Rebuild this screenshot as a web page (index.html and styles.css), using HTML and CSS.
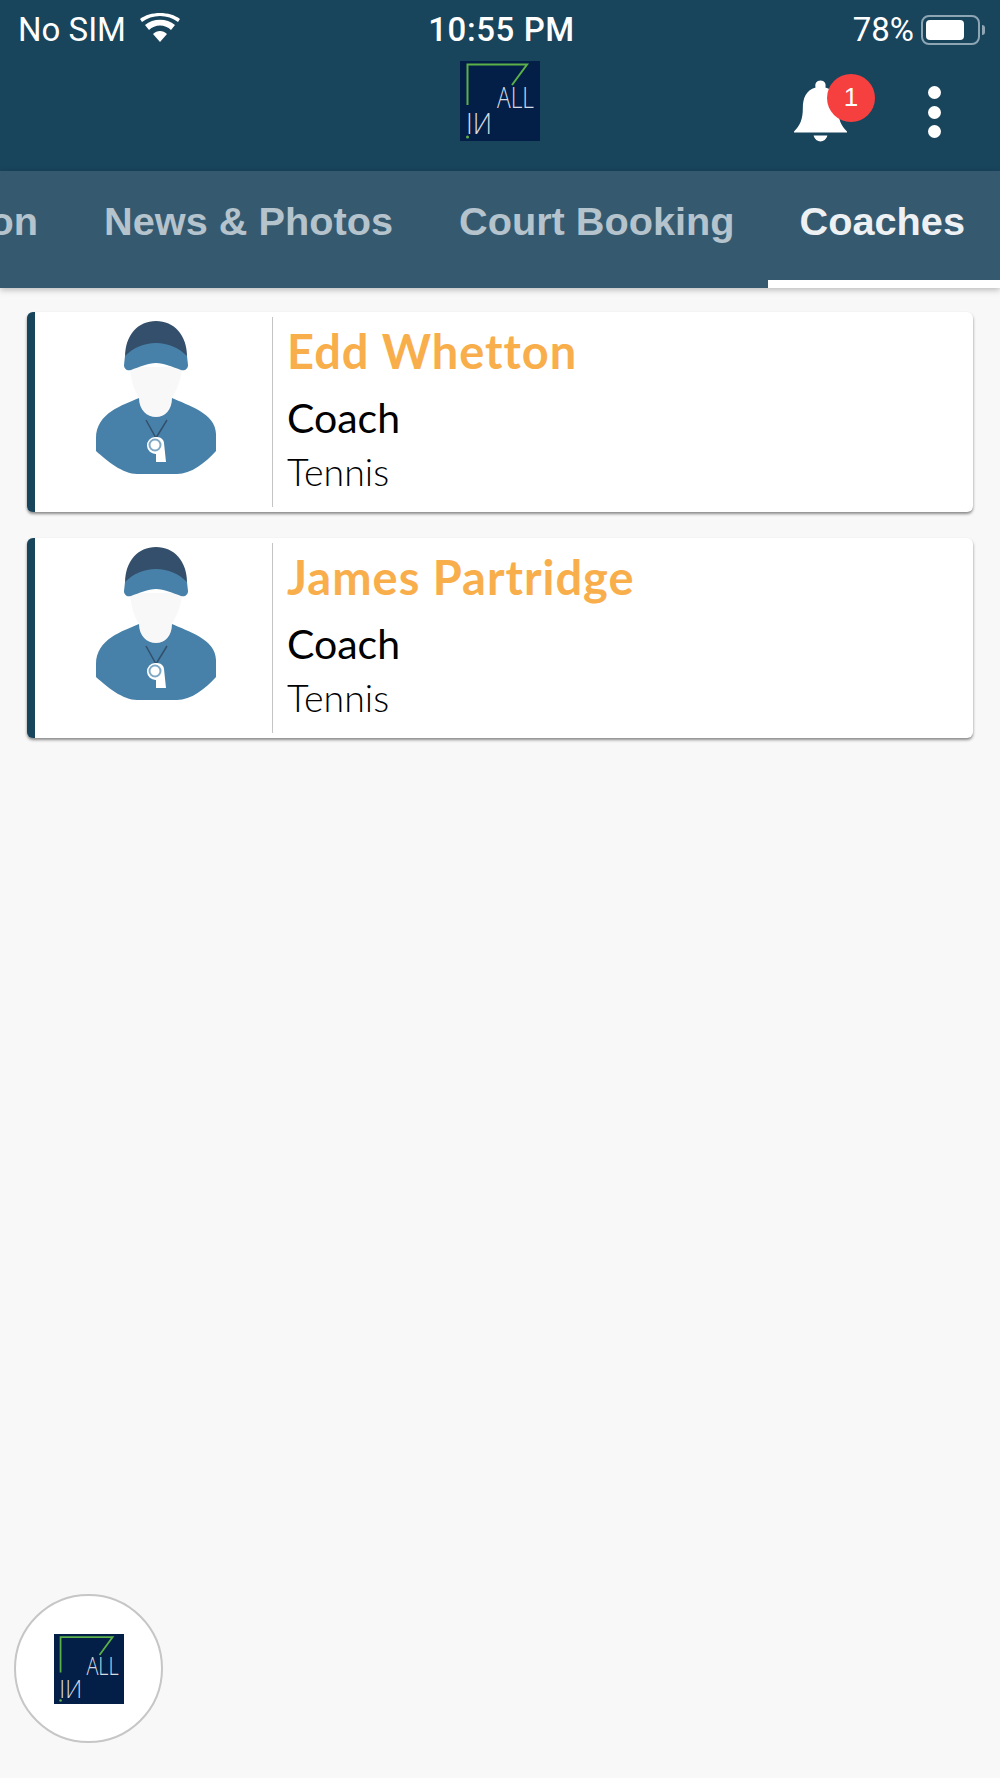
FILE: index.html
```html
<!DOCTYPE html>
<html lang="en">
<head>
    <meta charset="UTF-8">
    <meta name="viewport" content="width=device-width, initial-scale=1.0">
    <title>Coaches</title>
    <link rel="stylesheet" href="styles.css">
</head>
<body>
    <svg class="defs" width="0" height="0">
        <symbol id="coach" viewBox="0 0 237 200">
            <path d="M104 86C88 93 61 101 61 126V139C72 149 88 162 102 162H142C156 162 170 151 181 139V122C181 101 152 93 137 86Z" fill="#4781a9"/>
            <path d="M95 55C96 71 100 79 104 86C104 98 112 105 121 105C130 105 137 98 137 86C142 77 146 69 147 55Z" fill="#f8f8f8"/>
            <path d="M90 45C90 23 103 9 121 9C139 9 152 23 152 45Z" fill="#344f6b"/>
            <path d="M90 44C98 36 109 31 121 31C133 31 144 36 152 44L153 53C153 57 150 59 146 58C138 55 129 51 121 51C113 51 104 55 96 58C92 59 89 57 89 53Z" fill="#4781a9"/>
            <path d="M111 108L121 126L132 108" fill="none" stroke="#344f6b" stroke-width="1.5"/>
            <path d="M120 125H122C126 125 129 128 129 131L131 150H121V142A8.5 8.5 0 0 1 120 125Z" fill="#fff"/>
            <circle cx="120" cy="133" r="5.5" fill="none" stroke="#7fa8c4" stroke-width="2"/>
        </symbol>
    </svg>

    <header class="topbar">
        <div class="status">
            <div class="status-left">
                <span>No SIM</span>
                <svg class="wifi" viewBox="0 0 40 30">
                    <path d="M20 29L13 21C17 17 23 17 27 21ZM9 17L5 12C13 5 27 5 35 12L31 17C25 11 15 11 9 17ZM2 9L0 6C10 -2 30 -2 40 6L38 9C28 1 12 1 2 9Z" fill="#fff"/>
                </svg>
            </div>
            <div class="status-time">10:55 PM</div>
            <div class="status-right">
                <span>78%</span>
                <div class="battery"><div class="battery-fill"></div></div>
                <div class="battery-nub"></div>
            </div>
        </div>
        <div class="actions">
            <svg class="logo-top" viewBox="0 0 80 80">
                <rect width="80" height="80" fill="#041f47"/>
                <path d="M7.5 44V3.5H67L52 24" fill="none" stroke="#5cb048" stroke-width="2"/>
                <circle cx="7.5" cy="76" r="1.5" fill="#5cb048"/>
                <text class="logo-text" x="37" y="47" textLength="37" lengthAdjust="spacingAndGlyphs">ALL</text>
                <text class="logo-text" x="6" y="73" textLength="26" lengthAdjust="spacingAndGlyphs">IИ</text>
            </svg>
            <div class="bell-wrap">
                <svg class="bell" viewBox="0 0 54 62">
                    <path d="M27 0C31 0 33 3 32 7C42 10 45 18 45 28C45 40 48 46 54 52V53H0V52C6 46 9 40 9 28C9 18 12 10 22 7C21 3 23 0 27 0ZM20 56H34C33 60 30 62 27 62C24 62 21 60 20 56Z" fill="#fff"/>
                </svg>
                <span class="badge">1</span>
            </div>
            <div class="more"><i></i><i></i><i></i></div>
        </div>
    </header>

    <nav class="tabs">
        <a class="tab">Information</a>
        <a class="tab">News &amp; Photos</a>
        <a class="tab">Court Booking</a>
        <a class="tab active">Coaches</a>
    </nav>

    <main class="list">
        <div class="card">
            <svg class="avatar"><use href="#coach"/></svg>
            <div class="info">
                <div class="name">Edd Whetton</div>
                <div class="role">Coach</div>
                <div class="sport">Tennis</div>
            </div>
        </div>
        <div class="card">
            <svg class="avatar"><use href="#coach"/></svg>
            <div class="info">
                <div class="name">James Partridge</div>
                <div class="role">Coach</div>
                <div class="sport">Tennis</div>
            </div>
        </div>
    </main>

    <div class="fab">
        <svg class="logo-fab" viewBox="0 0 80 80">
            <rect width="80" height="80" fill="#041f47"/>
            <path d="M7.5 44V3.5H67L52 24" fill="none" stroke="#5cb048" stroke-width="2"/>
            <circle cx="7.5" cy="76" r="1.5" fill="#5cb048"/>
            <text class="logo-text" x="37" y="47" textLength="37" lengthAdjust="spacingAndGlyphs">ALL</text>
            <text class="logo-text" x="6" y="73" textLength="26" lengthAdjust="spacingAndGlyphs">IИ</text>
        </svg>
    </div>
</body>
</html>
```

FILE: styles.css
```css
* {box-sizing: border-box}
html, body {margin: 0; height: 100%}
body {font-family: "Liberation Sans", sans-serif; background: #f8f8f8; color: #000; height: 1778px; overflow: hidden; position: relative}
.defs {position: absolute}

.topbar {background: #18445c; height: 171px; color: #fff; position: relative}
.status {display: flex; justify-content: space-between; align-items: center; height: 54px; padding: 5px 15px 0 18px; font-family: Roboto, sans-serif; font-size: 33px; position: relative}
.status-left {display: flex; align-items: center; gap: 14px; width: 300px}
.wifi {width: 40px; height: 30px; margin-top: -3px}
.status-time {font-weight: 500; letter-spacing: 0.6px}
.status-right {display: flex; align-items: center; justify-content: flex-end; width: 300px}
.battery {width: 59px; height: 30px; border: 2px solid #8ea6b4; border-radius: 8px; padding: 3px; margin-left: 7px}
.battery-fill {width: 38px; height: 20px; background: #fff; border-radius: 4px}
.battery-nub {width: 3px; height: 10px; background: #8ea6b4; border-radius: 0 3px 3px 0; margin-left: 2px}

.actions {position: relative; height: 117px}
.logo-top {position: absolute; left: 460px; top: 7px; width: 80px; height: 80px; overflow: visible}
.logo-text {font-family: "Open Sans", sans-serif; font-size: 29px; font-weight: 300; fill: #d5dbe3}
.bell-wrap {position: absolute; left: 794px; top: 26px; width: 53px; height: 62px}
.bell {width: 53px; height: 62px; display: block}
.badge {position: absolute; left: 33px; top: -6px; width: 48px; height: 48px; border-radius: 50%; background: #f64040; font-size: 26px; line-height: 46px; text-align: center; color: #fff}
.more {position: absolute; left: 928px; top: 32px; display: flex; flex-direction: column; gap: 6.5px}
.more i {display: block; width: 13px; height: 13px; background: #fff; border-radius: 50%}

.tabs {display: flex; justify-content: flex-end; height: 117px; background: #355a70; box-shadow: 0 2px 6px rgba(0,0,0,.25); position: relative; overflow: hidden}
.tab {flex: none; padding: 28px 33px 0; font-size: 39.7px; font-weight: bold; color: #b5c3cd; white-space: nowrap}
.tab.active {color: #eef1f3; padding: 28px 35px 0 32px; border-bottom: 8px solid #fff}

.list {padding: 24px 27px 0; display: flex; flex-direction: column; gap: 26px}
.card {display: flex; height: 200px; background: #fff; border-left: 8px solid #18445c; border-radius: 6px; box-shadow: 0 2px 3px rgba(0,0,0,.45)}
.avatar {width: 237px; height: 200px; flex: none}
.info {flex: 1; margin: 5px 0; border-left: 1px solid #c4c4c4; padding-left: 14px; font-family: Lato, sans-serif}
.name {font-size: 47px; font-weight: bold; line-height: 56px; margin-top: 6px; letter-spacing: 1px; color: #f9ae4c}
.role {font-size: 41px; line-height: 50px; margin-top: 14px}
.sport {font-size: 37.5px; line-height: 44px; margin-top: 7px; font-weight: 300}

.fab {position: absolute; left: 14px; top: 1594px; width: 149px; height: 149px; border: 2px solid #c6c6c6; border-radius: 50%; background: #fff; display: flex; align-items: center; justify-content: center}
.logo-fab {width: 70px; height: 70px; overflow: visible}
```
